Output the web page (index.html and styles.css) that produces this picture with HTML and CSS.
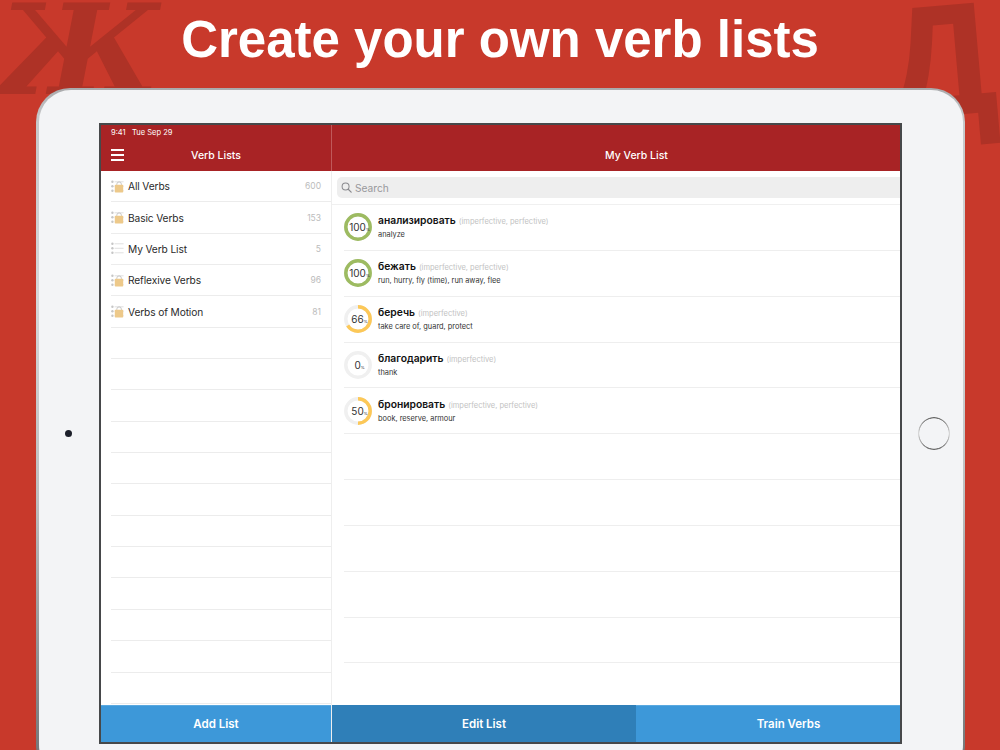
FILE: index.html
```html
<!DOCTYPE html>
<html lang="en">
<head>
<meta charset="utf-8">
<title>Create your own verb lists</title>
<link rel="stylesheet" href="styles.css">
</head>
<body>
<div class="stage">
  <span class="deco deco-zhe">Ж</span>
  <span class="deco deco-de">Д</span>
  <h1 class="headline">Create your own verb lists</h1>
  <div class="tablet">
    <div class="bezel">
      <div class="side side-left"><span class="camera"></span></div>
      <div class="screen">
        <div class="app">
          <section class="left">
            <header class="bar">
              <div class="status"><span>9:41</span><span>Tue Sep 29</span></div>
              <div class="nav">
                <span class="burger"><i></i><i></i><i></i></span>
                <span class="nav-title">Verb Lists</span>
              </div>
            </header>
            <ul class="lists">
              <li class="list-row"><svg class="li-icon" viewBox="0 0 13 13"><use href="#lockicon"/></svg><span class="list-name">All Verbs</span><span class="list-count">600</span></li>
              <li class="list-row"><svg class="li-icon" viewBox="0 0 13 13"><use href="#lockicon"/></svg><span class="list-name">Basic Verbs</span><span class="list-count">153</span></li>
              <li class="list-row"><svg class="li-icon" viewBox="0 0 13 13"><use href="#listicon"/></svg><span class="list-name">My Verb List</span><span class="list-count">5</span></li>
              <li class="list-row"><svg class="li-icon" viewBox="0 0 13 13"><use href="#lockicon"/></svg><span class="list-name">Reflexive Verbs</span><span class="list-count">96</span></li>
              <li class="list-row"><svg class="li-icon" viewBox="0 0 13 13"><use href="#lockicon"/></svg><span class="list-name">Verbs of Motion</span><span class="list-count">81</span></li>
              <li class="list-row"></li><li class="list-row"></li><li class="list-row"></li><li class="list-row"></li>
              <li class="list-row"></li><li class="list-row"></li><li class="list-row"></li><li class="list-row"></li>
              <li class="list-row"></li><li class="list-row"></li><li class="list-row"></li><li class="list-row"></li>
            </ul>
            <footer class="foot"><span class="foot-btn">Add List</span></footer>
          </section>
          <section class="right">
            <header class="bar">
              <div class="status status-right">
                <svg class="wifi" viewBox="0 0 12 9"><path d="M6 8.6 4.3 6.7a2.6 2.6 0 0 1 3.4 0Z" fill="#fff"/><path d="M2.7 5.1a5 5 0 0 1 6.6 0M.9 3A7.7 7.7 0 0 1 11.1 3" fill="none" stroke="#fff" stroke-width="1.3"/></svg>
                <span>100%</span>
              </div>
              <div class="nav nav-center"><span class="nav-title">My Verb List</span></div>
            </header>
            <div class="search-wrap">
              <div class="search">
                <svg class="search-icon" viewBox="0 0 12 12"><circle cx="5" cy="5" r="3.8" fill="none" stroke="#8a8a8e" stroke-width="1.1"/><path d="m7.9 7.9 3.2 3.2" stroke="#8a8a8e" stroke-width="1.3" stroke-linecap="round"/></svg>
                <span>Search</span>
              </div>
            </div>
            <ul class="verbs">
              <li class="verb-row">
                <div class="ring"><svg viewBox="0 0 28 28"><circle class="track" cx="14" cy="14" r="12.2"/><circle class="arc arc-green" pathLength="100" stroke-dasharray="100 100" cx="14" cy="14" r="12.2"/></svg><span class="pct">100<small>%</small></span></div>
                <div class="verb-text"><p class="verb-line"><b>анализировать</b><span class="aspect">(imperfective, perfective)</span></p><p class="gloss">analyze</p></div>
              </li>
              <li class="verb-row">
                <div class="ring"><svg viewBox="0 0 28 28"><circle class="track" cx="14" cy="14" r="12.2"/><circle class="arc arc-green" pathLength="100" stroke-dasharray="100 100" cx="14" cy="14" r="12.2"/></svg><span class="pct">100<small>%</small></span></div>
                <div class="verb-text"><p class="verb-line"><b>бежать</b><span class="aspect">(imperfective, perfective)</span></p><p class="gloss">run, hurry, fly (time), run away, flee</p></div>
              </li>
              <li class="verb-row">
                <div class="ring"><svg viewBox="0 0 28 28"><circle class="track" cx="14" cy="14" r="12.2"/><circle class="arc arc-yellow" pathLength="100" stroke-dasharray="66 100" cx="14" cy="14" r="12.2"/></svg><span class="pct">66<small>%</small></span></div>
                <div class="verb-text"><p class="verb-line"><b>беречь</b><span class="aspect">(imperfective)</span></p><p class="gloss">take care of, guard, protect</p></div>
              </li>
              <li class="verb-row">
                <div class="ring"><svg viewBox="0 0 28 28"><circle class="track" cx="14" cy="14" r="12.2"/></svg><span class="pct">0<small>%</small></span></div>
                <div class="verb-text"><p class="verb-line"><b>благодарить</b><span class="aspect">(imperfective)</span></p><p class="gloss">thank</p></div>
              </li>
              <li class="verb-row">
                <div class="ring"><svg viewBox="0 0 28 28"><circle class="track" cx="14" cy="14" r="12.2"/><circle class="arc arc-yellow" pathLength="100" stroke-dasharray="50 100" cx="14" cy="14" r="12.2"/></svg><span class="pct">50<small>%</small></span></div>
                <div class="verb-text"><p class="verb-line"><b>бронировать</b><span class="aspect">(imperfective, perfective)</span></p><p class="gloss">book, reserve, armour</p></div>
              </li>
              <li class="verb-row"></li><li class="verb-row"></li><li class="verb-row"></li><li class="verb-row"></li><li class="verb-row"></li>
            </ul>
            <footer class="foot">
              <span class="foot-btn foot-edit">Edit List</span>
              <span class="foot-btn">Train Verbs</span>
            </footer>
          </section>
        </div>
      </div>
      <div class="side side-right"><span class="home"></span></div>
    </div>
  </div>
</div>
<svg class="defs" width="0" height="0" aria-hidden="true">
  <defs>
    <g id="listicon">
      <circle cx="1.4" cy="1.8" r="1.2" fill="#c6c6c6"/><circle cx="1.4" cy="6.3" r="1.2" fill="#c6c6c6"/><circle cx="1.4" cy="10.8" r="1.2" fill="#c6c6c6"/>
      <path d="M3.6 1.8H12.6M3.6 6.3H12.6M3.6 10.8H12.6" stroke="#d2d2d2" stroke-width=".7"/>
    </g>
    <g id="lockicon">
      <use href="#listicon"/>
      <path d="M5.8 5.2V4.2a2.3 2.3 0 0 1 4.6 0v1" fill="none" stroke="#bdbdbd" stroke-width=".8"/>
      <rect x="3.8" y="4.8" width="8.4" height="7.6" rx=".7" fill="#edc98a"/>
    </g>
  </defs>
</svg>
</body>
</html>
```
FILE: styles.css
```css
* { box-sizing: border-box; }
html, body { margin: 0; padding: 0; height: 100%; }
body { overflow: hidden; background: #c8392b; font-family: Inter, "Liberation Sans", sans-serif; }
ul { list-style: none; margin: 0; padding: 0; }
p { margin: 0; }
.defs { position: absolute; }

.stage { position: relative; width: 1000px; height: 750px; overflow: hidden; }
.deco { position: absolute; color: #ae3226; line-height: 1; }
.deco-zhe { left: -4px; top: -12px; font: italic 700 125px/1 "DejaVu Serif", serif; }
.deco-de { left: 882px; top: -19px; font: 700 160px/1 "Liberation Sans", sans-serif; transform: rotate(-5deg); }

.headline { position: relative; margin: 0; height: 88px; padding-top: 8px; text-align: center; color: #fff; font: 700 51px/64px "Liberation Sans", sans-serif; }

.tablet { position: relative; margin: 0 35px 0 36px; height: 691px; padding: 2px 2.5px; border-radius: 34px;
  background: linear-gradient(180deg, #a9aaac 0, #c6c7c9 4%, #d6d7d9 30%, #bdbebf 60%, #6f7072 100%); }
.bezel { display: flex; align-items: center; height: 100%; border-radius: 32px; background: #f3f4f6; }
.side { display: flex; align-items: center; justify-content: center; flex: none; }
.side-left { width: 60.5px; }
.side-right { width: 60.5px; padding-left: 4px; }
.camera { width: 7px; height: 7px; border-radius: 50%; background: #1c1f2a; }
.home { width: 32px; height: 33px; border-radius: 50%;
  background: conic-gradient(#5b5b5b 0, #d4d4d4 25%, #5f5f5f 50%, #d4d4d4 75%, #5b5b5b 100%);
  -webkit-mask: radial-gradient(closest-side, transparent calc(100% - 1.6px), #000 calc(100% - 1px));
  mask: radial-gradient(closest-side, transparent calc(100% - 1.6px), #000 calc(100% - 1px)); }

.screen { flex: none; width: 803px; height: 621px; border: 2px solid #46484a; overflow: hidden; background: #fff; }
.app { display: flex; width: 840px; height: 617px; }

.left { display: flex; flex-direction: column; flex: none; width: 231px; border-right: 1px solid #eeeeee; }
.right { display: flex; flex-direction: column; flex: none; width: 609px; }

.bar { flex: none; height: 46px; background: #a82325; color: #fff; }
.left .bar { border-right: 1px solid #c0595a; margin-right: -1px; }
.status { display: flex; gap: 6.5px; height: 14px; padding: 3px 0 0 10px; font-size: 7.5px; line-height: 9px; }
.status-right { justify-content: flex-end; align-items: center; gap: 3px; padding: 3px 0 0; width: 603px; }
.wifi { width: 9px; height: 7px; }
.nav { position: relative; display: flex; align-items: center; justify-content: center; height: 32px; }
.nav-title { font-size: 10.5px; font-weight: 500; }
.burger { position: absolute; left: 10px; top: 10px; display: flex; flex-direction: column; gap: 2.7px; width: 13px; }
.burger i { display: block; height: 2.3px; background: #fff; }

.lists { flex: 1; overflow: hidden; }
.list-row { display: flex; align-items: center; height: 31.35px; margin-left: 10px; border-bottom: 1px solid #ececec; padding-right: 10px; }
.li-icon { flex: none; width: 13px; height: 13px; margin-right: 4px; }
.list-name { flex: 1; font-size: 10.2px; letter-spacing: -.12px; color: #2a2a2a; }
.list-count { font-size: 8.5px; color: #bcbcbc; }

.foot { display: flex; flex: none; height: 37px; background: #3d98d9; border-top: 1px solid #5aa9e0; }
.foot-btn { flex: 1; display: flex; align-items: center; justify-content: center; color: #fff; font-size: 11.5px; font-weight: 600; }
.foot-edit { flex: none; width: 304px; background: #2f7fb8; border-top: 1px solid #2f7fb8; margin-top: -1px; }

.search-wrap { flex: none; height: 34px; padding: 6px 0 6px 5px; border-bottom: 1px solid #f0f0f0; }
.search { display: flex; align-items: center; height: 21px; padding-left: 4px; gap: 3px; border-radius: 5px; background: #eeeeee; color: #98989c; font-size: 10.2px; }
.search-icon { width: 11px; height: 11px; }

.verbs { flex: 1; overflow: hidden; }
.verb-row { display: flex; align-items: center; height: 45.85px; margin-left: 12px; border-bottom: 1px solid #eeeeee; }
.ring { position: relative; flex: none; width: 28px; height: 28px; margin-right: 6px; }
.ring svg { display: block; width: 28px; height: 28px; transform: rotate(-90deg); }
.track, .arc { fill: none; stroke-width: 3.5; }
.track { stroke: #f0f0f0; }
.arc-green { stroke: #9dbb61; }
.arc-yellow { stroke: #fcc858; }
.pct { position: absolute; inset: 0; display: flex; align-items: center; justify-content: center; font-size: 10px; color: #333; }
.pct small { font-size: 4px; margin-right: -3px; align-self: flex-end; margin-bottom: 9px; }
.verb-text { min-width: 0; padding-bottom: 1px; }
.verb-line { font-size: 10.3px; line-height: 14px; color: #111; white-space: nowrap; }
.verb-line b { font-weight: 600; }
.aspect { margin-left: 3px; font-size: 7.5px; color: #c2c2c2; }
.gloss { margin-top: 1px; font-size: 7.4px; line-height: 10px; color: #333; }
```
